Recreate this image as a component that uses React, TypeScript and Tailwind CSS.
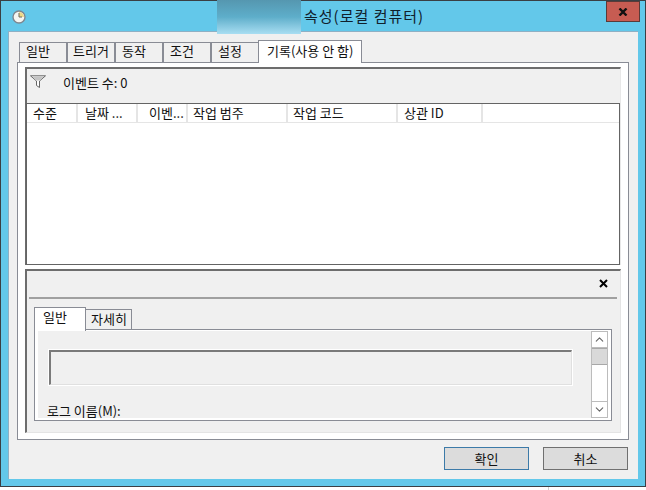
import React from 'react';
import { ChevronUp, ChevronDown } from 'lucide-react';

const font = { fontFamily: '"Noto Sans CJK KR", "Liberation Sans", sans-serif' };

const topTabs = [
  { label: '일반', pad: 'pl-[6px]' },
  { label: '트리거', pad: 'pl-[5px]' },
  { label: '동작', pad: 'pl-[6px]' },
  { label: '조건', pad: 'pl-[6px]' },
  { label: '설정', pad: 'pl-[6px]' },
];

const columns = [
  { label: '수준', cls: 'w-[51px] pl-[6px]' },
  { label: '날짜 ...', cls: 'w-[60px] pl-[7px]' },
  { label: '이벤...', cls: 'w-[50px] pl-[11px]' },
  { label: '작업 범주', cls: 'w-[100px] pl-[5px]' },
  { label: '작업 코드', cls: 'w-[110px] pl-[5px]' },
  { label: '상관 ID', cls: 'w-[85px] pl-[6px]' },
];

const App: React.FC = () => {
  return (
    <div className="w-[646px] h-[490px] bg-white overflow-hidden text-[13px] leading-[16px] text-[#111]" style={font}>
      <div className="h-[487px] border border-[#3a3f44] bg-[#63c8ea] px-[7px] pb-[7px] flex flex-col">
        {/* Title bar */}
        <div className="h-[30px] flex shrink-0 relative">
          <svg width="14" height="14" viewBox="0 0 14 14" className="ml-[4px] mt-[9px]">
            <circle cx="7" cy="7" r="6" fill="#f6f6f2" stroke="#7f8790" strokeWidth="1.4" />
            <path d="M7 7V2a5 5 0 0 1 5 5z" fill="#eed98a" />
            <path d="M7 3v4h3" fill="none" stroke="#6a6a60" strokeWidth="1" />
          </svg>
          <div className="ml-[191px] w-[84px] h-[34px] -mt-px z-10 bg-gradient-to-b from-[#5597b0] via-[#5eaeca] to-[#a8def2]"></div>
          <span className="ml-[3px] mt-[6px] text-[15px] leading-[18px] tracking-[1px] text-[#10202c]">속성(로컬 컴퓨터)</span>
          <div className="ml-auto -mr-[2px] w-[34px] h-[21px] bg-[#c75c52] border border-[#5a3a38] flex items-center justify-center">
            <svg width="10" height="8" viewBox="0 0 10 8">
              <path d="M1.5 .5 8.5 7.5M8.5 .5 1.5 7.5" stroke="#111" strokeWidth="2.4" />
            </svg>
          </div>
        </div>

        {/* Client area */}
        <div className="flex-1 bg-[#f0f0f0] border-t border-l border-[#8fb0c4] flex flex-col">
          <div className="flex pl-[10px] h-[30px] shrink-0 items-end">
            {topTabs.map((tab) => (
              <div key={tab.label} className={`w-[48px] h-[20px] bg-[#f0f0f0] border border-[#898c95] border-b-0 ${tab.pad}`}>
                {tab.label}
              </div>
            ))}
            <div className="w-[104px] h-[23px] bg-white border border-[#898c95] border-b-0 pl-[8px] pt-[2px] -mb-px -ml-px z-10 relative">
              기록(사용 안 함)
            </div>
          </div>

          {/* Tab panel */}
          <div className="ml-[8px] w-[612px] h-[378px] shrink-0 bg-white border border-[#898c95] pl-[7px] pr-[7px] pt-[4px] flex flex-col">
            {/* Event list pane */}
            <div className="h-[198px] shrink-0 bg-[#f0f0f0] border-t-2 border-l-2 border-[#6d6d6d] border-r border-r-[#e8e8e8] flex flex-col">
              <div className="h-[34px] shrink-0 flex items-start pl-[3px] pt-[6px]">
                <svg width="16" height="13" viewBox="0 0 16 13">
                  <path d="M.5 .8h15l-6 5.2v6.5l-3-2V6z" fill="#fff" stroke="#666" strokeWidth="1" />
                  <path d="M2 1.5h12L9.5 5.5h-3z" fill="#c4c4c4" />
                </svg>
                <span className="ml-[17px]">이벤트 수: 0</span>
              </div>
              <div className="flex-1 -ml-px bg-white border border-[#646464]">
                <div className="h-[19px] flex border-b border-[#e5e5e5]">
                  {columns.map((c) => (
                    <div key={c.label} className={`${c.cls} border-r-2 border-[#e5e5e5] leading-[18px]`}>
                      {c.label}
                    </div>
                  ))}
                </div>
              </div>
            </div>

            {/* Detail pane */}
            <div className="mt-[4px] h-[164px] shrink-0 bg-[#f0f0f0] border-t-2 border-l-2 border-[#6d6d6d] border-r border-b border-r-[#e4e4e4] border-b-[#e4e4e4] flex flex-col">
              <div className="h-[26px] shrink-0 flex justify-end items-center pr-[12px] pb-[2px]">
                <svg width="9" height="9" viewBox="0 0 9 9">
                  <path d="M1 1 8 8M8 1 1 8" stroke="#000" strokeWidth="2" />
                </svg>
              </div>
              <div className="h-[2px] shrink-0 ml-[2px] mr-[3px] bg-[#a0a0a0]"></div>

              <div className="flex items-end ml-[7px] mt-[8px] h-[22px] shrink-0">
                <div className="w-[52px] h-[24px] bg-white border border-[#898c95] border-b-0 pl-[8px] pt-[1px] relative z-10 -mb-[2px]">
                  일반
                </div>
                <div className="w-[46px] h-[20px] bg-[#f0f0f0] border border-[#898c95] border-b-0 border-l-0 pl-[5px] pt-[1px]">
                  자세히
                </div>
              </div>

              <div className="ml-[7px] w-[578px] h-[92px] shrink-0 bg-white border border-[#898c95] pl-[3px] pr-[3px] pt-[1px] pb-[2px]">
                <div className="h-full bg-[#f0f0f0] flex">
                  <div className="flex-1 pl-[11px] pt-[19px]">
                    <div className="w-[523px] h-[35px] border-t-2 border-l-2 border-[#7a7a7a] border-r border-b border-r-[#e0e0e0] border-b-[#e0e0e0] outline outline-1 outline-white bg-[#f0f0f0]"></div>
                    <div className="-ml-[2px] mt-[19px] leading-[14px]">로그 이름(M):</div>
                  </div>
                  <div className="w-[17px] h-full shrink-0 bg-white border-x border-[#bcbcbc] flex flex-col">
                    <div className="h-[17px] border-y border-[#bcbcbc] flex items-center justify-center">
                      <ChevronUp size={13} color="#666" />
                    </div>
                    <div className="h-[17px] bg-[#d9d9d9] border-y border-[#a8a8a8]"></div>
                    <div className="flex-1"></div>
                    <div className="h-[17px] border-y border-[#bcbcbc] flex items-center justify-center">
                      <ChevronDown size={13} color="#666" />
                    </div>
                  </div>
                </div>
              </div>
            </div>
          </div>

          {/* Buttons */}
          <div className="flex justify-end gap-[14px] pr-[10px] pt-[7px]">
            <div className="w-[85px] h-[23px] bg-[#dcdcdc] border border-[#3c7aa8] flex items-center justify-center">확인</div>
            <div className="w-[85px] h-[23px] bg-[#dcdcdc] border border-[#707070] flex items-center justify-center">취소</div>
          </div>
        </div>
      </div>
      <div className="ml-[548px] w-px h-[3px] bg-[#d0d0d0]"></div>
    </div>
  );
};

export default App;
